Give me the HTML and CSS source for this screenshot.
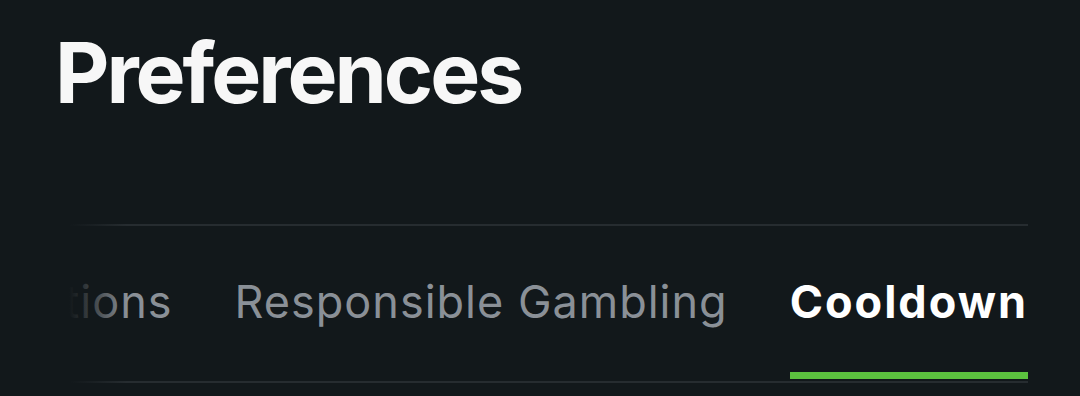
FILE: index.html
```html
<!DOCTYPE html>
<html lang="en">
<head>
  <meta charset="UTF-8" />
  <meta name="viewport" content="width=device-width, initial-scale=1.0" />
  <title>Preferences</title>
  <link rel="stylesheet" href="styles.css">
</head>
<body>
  <div class="page">
    <h1>Preferences</h1>
    <div class="tabs-wrap">
      <nav class="tabs">
        <a class="tab">Notifications</a>
        <a class="tab">Responsible Gambling</a>
        <a class="tab active">Cooldown</a>
      </nav>
    </div>
  </div>
</body>
</html>
```

FILE: styles.css
```css
body {
  font-family: Inter, 'Noto Sans', sans-serif;
  background-color: #12181b;
  color: #fff;
  margin: 0;
}

.page {
  padding: 21px 52px 0 55px;
}

h1 {
  margin: 0;
  font-size: 84px;
  font-weight: 700;
  line-height: 104px;
  color: #f7f7f7;
  letter-spacing: -3px;
}

.tabs-wrap {
  position: relative;
  margin-top: 99px;
}

/* fade on the left, over the scrolled-off tabs */
.tabs-wrap::before {
  content: '';
  position: absolute;
  top: 0;
  bottom: 0;
  left: 0;
  width: 72px;
  background: linear-gradient(to right, #12181b 20%, rgba(18, 24, 27, 0.6) 55%, rgba(18, 24, 27, 0));
  z-index: 1;
}

.tabs {
  display: flex;
  justify-content: flex-end;
  gap: 62px;
  white-space: nowrap;
  overflow: hidden;
  border-top: 2px solid #262c30;
  border-bottom: 2px solid #262c30;
}

.tab {
  display: block;
  flex-shrink: 0;
  padding-top: 46px;
  height: 100px;
  font-size: 45px;
  line-height: 60px;
  letter-spacing: 1px;
  color: #8a9097;
  border-bottom: 7px solid transparent;
  margin-bottom: 2px;
}

.tab.active {
  color: #fff;
  font-weight: 700;
  letter-spacing: 2px;
  border-bottom-color: #5cc23f;
}
```
